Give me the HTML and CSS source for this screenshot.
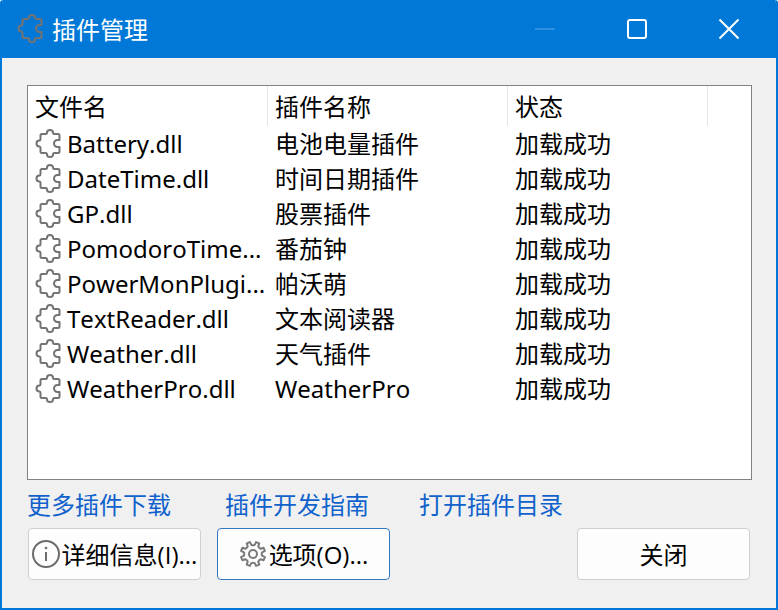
FILE: index.html
```html
<!DOCTYPE html>
<html lang="zh-CN">
<head>
    <meta charset="UTF-8">
    <meta name="viewport" content="width=device-width, initial-scale=1.0">
    <title>插件管理</title>
    <link rel="stylesheet" href="styles.css">
</head>
<body>
    <!-- shared icons -->
    <svg class="icon-defs" aria-hidden="true">
        <symbol id="puzzle" viewBox="0 0 26 30">
            <path d="M7 5H10.500Q12 5 12 3.500A3 2.500 0 0 1 18 3.500Q18 5 19.500 5H23Q24.500 5 24.500 6.500V11H22.500A3.500 3.500 0 0 0 22.500 18H24.500V22.500Q24.500 24 23 24H19.500Q18 24 18 25.500A3 2.500 0 0 1 12 25.500Q12 24 10.500 24H7Q5.500 24 5.500 22.500V19Q5.500 17.500 4.500 17.500A3 3 0 0 1 4.500 11.500Q5.500 11.500 5.500 10V6.500Q5.500 5 7 5Z" fill="none" stroke="#737373" stroke-width="2" stroke-linejoin="round"/>
        </symbol>
    </svg>

    <div class="window">
        <header class="title-bar">
            <svg class="puzzle-icon"><use href="#puzzle"/></svg>
            <h1>插件管理</h1>
            <button type="button" class="window-btn" aria-label="最小化" disabled>
                <svg width="22" height="22" viewBox="0 0 22 22"><path d="M1 11H21" stroke="#3090e0" stroke-width="2"/></svg>
            </button>
            <button type="button" class="window-btn" aria-label="最大化">
                <svg width="22" height="22" viewBox="0 0 22 22"><rect x="2" y="2" width="18" height="18" rx="2" fill="none" stroke="#fff" stroke-width="2"/></svg>
            </button>
            <button type="button" class="window-btn" aria-label="关闭窗口">
                <svg width="22" height="22" viewBox="0 0 22 22"><path d="M1.500 1.500L20.500 20.500M20.500 1.500L1.500 20.500" stroke="#fff" stroke-width="2"/></svg>
            </button>
        </header>

        <main class="content">
            <div class="plugin-list">
                <table>
                    <thead>
                        <tr><th>文件名</th><th>插件名称</th><th class="status">状态</th><td></td></tr>
                    </thead>
                    <tbody>
                        <tr><td><div class="file"><svg class="puzzle-icon"><use href="#puzzle"/></svg>Battery.dll</div></td><td>电池电量插件</td><td>加载成功</td></tr>
                        <tr><td><div class="file"><svg class="puzzle-icon"><use href="#puzzle"/></svg>DateTime.dll</div></td><td>时间日期插件</td><td>加载成功</td></tr>
                        <tr><td><div class="file"><svg class="puzzle-icon"><use href="#puzzle"/></svg>GP.dll</div></td><td>股票插件</td><td>加载成功</td></tr>
                        <tr><td><div class="file"><svg class="puzzle-icon"><use href="#puzzle"/></svg>PomodoroTime...</div></td><td>番茄钟</td><td>加载成功</td></tr>
                        <tr><td><div class="file"><svg class="puzzle-icon"><use href="#puzzle"/></svg>PowerMonPlugi...</div></td><td>帕沃萌</td><td>加载成功</td></tr>
                        <tr><td><div class="file"><svg class="puzzle-icon"><use href="#puzzle"/></svg>TextReader.dll</div></td><td>文本阅读器</td><td>加载成功</td></tr>
                        <tr><td><div class="file"><svg class="puzzle-icon"><use href="#puzzle"/></svg>Weather.dll</div></td><td>天气插件</td><td>加载成功</td></tr>
                        <tr><td><div class="file"><svg class="puzzle-icon"><use href="#puzzle"/></svg>WeatherPro.dll</div></td><td>WeatherPro</td><td>加载成功</td></tr>
                    </tbody>
                </table>
            </div>

            <nav class="links">
                <a href="#">更多插件下载</a>
                <a href="#">插件开发指南</a>
                <a href="#">打开插件目录</a>
            </nav>

            <div class="buttons">
                <button type="button" class="btn">
                    <svg width="28" height="28" viewBox="0 0 28 28">
                        <circle cx="14" cy="14" r="13" fill="none" stroke="#6b6b6b" stroke-width="2"/>
                        <path d="M14 12V21" stroke="#6b6b6b" stroke-width="2"/>
                        <circle cx="14" cy="8" r="1.300" fill="#6b6b6b"/>
                    </svg>
                    <span>详细信息(I)...</span>
                </button>
                <button type="button" class="btn btn-default">
                    <svg width="28" height="28" viewBox="-14 -14 28 28">
                        <g fill="none" stroke="#7a7a7a" stroke-width="2" stroke-linejoin="round">
                            <path d="M9.140 1.690L11.910 3.080L10.600 6.240L7.660 5.270Q5.900 5.900 5.270 7.660L6.240 10.600L3.080 11.910L1.690 9.140Q0 8.300 -1.690 9.140L-3.080 11.910L-6.240 10.600L-5.270 7.660Q-5.900 5.900 -7.660 5.270L-10.600 6.240L-11.910 3.080L-9.140 1.690Q-8.300 0 -9.140 -1.690L-11.910 -3.080L-10.600 -6.240L-7.660 -5.270Q-5.900 -5.900 -5.270 -7.660L-6.240 -10.600L-3.080 -11.910L-1.690 -9.140Q0 -8.300 1.690 -9.140L3.080 -11.910L6.240 -10.600L5.270 -7.660Q5.900 -5.900 7.660 -5.270L10.600 -6.240L11.910 -3.080L9.140 -1.690Q8.300 0 9.140 1.690Z"/>
                            <circle r="4"/>
                        </g>
                    </svg>
                    <span>选项(O)...</span>
                </button>
                <button type="button" class="btn btn-close">关闭</button>
            </div>
        </main>
    </div>
</body>
</html>
```
FILE: styles.css
```css
* {
    box-sizing: border-box;
}
body {
    margin: 0;
    background: #fff;
    font-family: "Open Sans", "Noto Sans CJK SC", sans-serif;
    font-size: 24px;
    font-kerning: none;
    line-height: 35px;
    color: #000;
}
button {
    font: inherit;
    font-kerning: none;
    color: inherit;
}
svg {
    display: block;
    flex: none;
}
.icon-defs {
    display: none;
}
.puzzle-icon {
    width: 26px;
    height: 30px;
}

.window {
    display: flex;
    flex-direction: column;
    min-height: 100vh;
    background: #f0f0f0;
    border: 2px solid #0078d7;
    border-top: none;
    border-radius: 3px 3px 0 0;
    overflow: hidden;
}

/* title bar */
.title-bar {
    display: flex;
    align-items: center;
    height: 58px;
    padding: 0 1px 0 15px;
    background: #0078d7;
    color: #fff;
}
.title-bar h1 {
    flex: 1;
    margin: 0 0 0 9px;
    font-size: 24px;
    font-weight: normal;
}
.window-btn {
    display: flex;
    align-items: center;
    justify-content: center;
    width: 92px;
    height: 58px;
    padding: 0;
    border: none;
    background: none;
}

.content {
    flex: 1;
    display: flex;
    flex-direction: column;
    padding: 27px 24px 28px 25px;
}

/* plugin list */
.plugin-list {
    flex: 1;
    background: #fff;
    border: 1px solid #828282;
}
table {
    width: 100%;
    font-family: "Noto Sans", "Noto Sans CJK SC", sans-serif;
    table-layout: fixed;
    border-collapse: separate;
    border-spacing: 0;
}
th, td {
    padding: 0 0 0 7px;
    height: 35px;
    text-align: left;
    font-weight: normal;
    white-space: nowrap;
}
th {
    width: 240px;
    height: 40px;
    border-right: 1px solid #e5e5e5;
}
th.status {
    width: 200px;
}
.file {
    display: flex;
    align-items: center;
    gap: 6px;
}

/* bottom area */
.links {
    display: grid;
    grid-template-columns: 198px 194px auto;
    padding: 7px 0 6px;
}
.links a {
    color: #0f62cc;
    text-decoration: none;
}
.buttons {
    display: flex;
    gap: 16px;
    padding: 0 2px 0 1px;
}
.btn {
    display: flex;
    align-items: center;
    justify-content: center;
    gap: 2px;
    width: 173px;
    height: 52px;
    padding: 0;
    background: #fdfdfd;
    border: 1px solid #d0d0d0;
    border-radius: 4px;
    white-space: nowrap;
}
.btn-default {
    border-color: #3578c4;
}
.btn-close {
    margin-left: auto;
}
```
